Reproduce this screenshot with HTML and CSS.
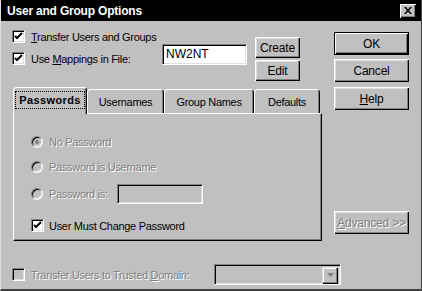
FILE: index.html
```html
<!DOCTYPE html>
<html>
<head>
<meta charset="utf-8">
<link rel="stylesheet" href="styles.css">
</head>
<body>
<div class="win">
  <div class="titlebar">
    <span class="title">User and Group Options</span>
    <span class="close"><svg width="8" height="7" viewBox="0 0 8 7"><path d="M0,0h2l2,2.5l2,-2.5h2l-3,3.5l3,3.5h-2l-2,-2.5l-2,2.5h-2l3,-3.5z" fill="#000"/></svg></span>
  </div>
  <div class="content">
    <div class="upper">
      <div class="left">
        <div class="top">
          <div class="checks">
            <div class="row"><span class="chk"><svg width="9" height="9" viewBox="0 0 9 9"><path d="M1,4 L3,6 L8,1" stroke="#000" stroke-width="2" fill="none"/></svg></span><span class="lbl"><u>T</u>ransfer Users and Groups</span></div>
            <div class="row"><span class="chk"><svg width="9" height="9" viewBox="0 0 9 9"><path d="M1,4 L3,6 L8,1" stroke="#000" stroke-width="2" fill="none"/></svg></span><span class="lbl">Use <u>M</u>appings in File:</span></div>
          </div>
          <div class="field file">NW2NT</div>
          <div class="btncol">
            <div class="btn small">Create</div>
            <div class="btn small">Edit</div>
          </div>
        </div>
        <div class="tabs">
          <div class="tab active w1"><span class="focus">Passwords</span></div>
          <div class="tab w2">Usernames</div>
          <div class="tab w3">Group Names</div>
          <div class="tab w4">Defaults</div>
        </div>
        <div class="panel">
          <div class="opt o1"><span class="radio"><span class="dot"></span></span><span class="dis">No Password</span></div>
          <div class="opt o2"><span class="radio"></span><span class="dis">Password is Username</span></div>
          <div class="opt o3"><span class="radio"></span><span class="dis pwlbl">Password is:</span><span class="field pwfield"></span></div>
          <div class="opt o4"><span class="chk"><svg width="9" height="9" viewBox="0 0 9 9"><path d="M1,4 L3,6 L8,1" stroke="#000" stroke-width="2" fill="none"/></svg></span><span class="lbl">User Must Change Password</span></div>
        </div>
      </div>
      <div class="right">
        <div class="btn default">OK</div>
        <div class="btn b-cancel">Cancel</div>
        <div class="btn b-help"><u>H</u>elp</div>
        <div class="btn b-adv"><span class="dis"><u>A</u>dvanced &gt;&gt;</span></div>
      </div>
    </div>
    <div class="bottom">
      <span class="chk off"></span>
      <span class="dis domlbl">Transfer Users to Trusted <u>D</u>omain:</span>
      <div class="combo">
        <span class="drop"><svg width="7" height="5" viewBox="0 0 7 5"><path d="M0,0h7l-3.5,4z" fill="#808080"/></svg></span>
      </div>
    </div>
  </div>
</div>
</body>
</html>
```

FILE: styles.css
```css
* { box-sizing: border-box; }
html, body { margin: 0; padding: 0; background: #c0c0c0; }
body {
  font-family: "Liberation Sans", Arial, sans-serif;
  font-size: 11px;
  letter-spacing: -0.3px;
  color: #000;
}
u { text-decoration: underline; text-underline-offset: 1px; }

.win {
  width: 422px;
  height: 291px;
  background: #c0c0c0;
  border-left: 1px solid #dfdfdf;
  border-right: 1px solid #404040;
  border-bottom: 2px solid #404040;
  display: flex;
  flex-direction: column;
}

.titlebar {
  height: 21px;
  background: #000;
  display: flex;
  align-items: center;
  justify-content: space-between;
  padding-left: 6px;
  padding-right: 5px;
}
.title {
  color: #fff;
  font-weight: bold;
  font-size: 12px;
  letter-spacing: -0.2px;
}
.close {
  width: 16px;
  height: 14px;
  background: #c0c0c0;
  box-shadow: inset 1px 1px 0 #fff, inset -1px -1px 0 #000, inset -2px -2px 0 #808080;
  display: flex;
  align-items: center;
  justify-content: center;
  padding-bottom: 1px;
}

.content {
  flex: 1;
  display: flex;
  flex-direction: column;
}
.upper {
  display: flex;
  padding-left: 11px;
  height: 220px;
}
.left {
  width: 310px;
  display: flex;
  flex-direction: column;
}
.top {
  display: flex;
  align-items: flex-start;
  height: 60px;
}
.checks {
  width: 150px;
  padding-top: 9px;
  display: flex;
  flex-direction: column;
  gap: 9px;
}
.row {
  display: flex;
  align-items: center;
  height: 13px;
}
.chk {
  width: 13px;
  height: 13px;
  flex: none;
  background: #fff;
  border: 1px solid;
  border-color: #808080 #fff #fff #808080;
  box-shadow: inset 1px 1px 0 #000, inset -1px -1px 0 #dfdfdf;
  display: flex;
  align-items: center;
  justify-content: center;
}
.chk.off { background: #c0c0c0; }
.row .lbl { margin-left: 6px; }

.field {
  background: #fff;
  border: 1px solid;
  border-color: #808080 #fff #fff #808080;
  box-shadow: inset 1px 1px 0 #000, inset -1px -1px 0 #dfdfdf;
}
.file {
  margin-top: 23px;
  width: 85px;
  height: 21px;
  padding-left: 3px;
  line-height: 19px;
  font-size: 12px;
  letter-spacing: 0;
}
.btncol {
  margin-left: 8px;
  padding-top: 16px;
  display: flex;
  flex-direction: column;
  gap: 2px;
}
.btn {
  display: flex;
  align-items: center;
  justify-content: center;
  height: 23px;
  width: 75px;
  background: #c0c0c0;
  box-shadow: inset 1px 1px 0 #fff, inset -1px -1px 0 #000, inset -2px -2px 0 #808080, inset 2px 2px 0 #dfdfdf;
  font-size: 12px;
  letter-spacing: -0.2px;
}
.btn.small { width: 45px; height: 21px; }
.btn.default {
  border: 1px solid #000;
  box-shadow: inset 1px 1px 0 #fff, inset -1px -1px 0 #000, inset -2px -2px 0 #808080;
}

.tabs {
  margin-top: 6px;
  margin-left: 1px;
  height: 26px;
  display: flex;
  align-items: flex-end;
  position: relative;
  z-index: 1;
}
.tab {
  height: 24px;
  display: flex;
  align-items: center;
  justify-content: center;
  background: #c0c0c0;
  border-top: 1px solid #fff;
  border-left: 1px solid #fff;
  border-right: 1px solid #000;
  border-radius: 4px 4px 0 0;
  box-shadow: inset -1px 0 0 #808080;
  font-size: 11px;
}
.tab.active {
  height: 27px;
  margin-bottom: -1px;
  font-weight: bold;
  letter-spacing: 0.4px;
  padding-bottom: 2px;
}
.focus {
  outline: 1px dotted #000;
  outline-offset: 2px;
  padding: 0 1px;
}
.w1 { width: 74px; }
.w2 { width: 77px; }
.w3 { width: 90px; }
.w4 { width: 66px; }

.panel {
  margin-left: 1px;
  width: 309px;
  height: 128px;
  border-top: 1px solid #fff;
  border-left: 1px solid #fff;
  border-right: 1px solid #000;
  border-bottom: 1px solid #000;
  box-shadow: inset -1px -1px 0 #808080;
  padding-left: 17px;
  padding-top: 18px;
  display: flex;
  flex-direction: column;
}
.opt {
  display: flex;
  align-items: center;
  height: 20px;
}
.o2 { margin-top: 5px; }
.o3 { margin-top: 7px; }
.o4 { margin-top: 15px; height: 13px; }
.o4 .lbl { margin-left: 5px; }
.radio {
  width: 12px;
  height: 12px;
  flex: none;
  border-radius: 50%;
  border: 1px solid;
  border-color: #808080 #fff #fff #808080;
  box-shadow: inset 1px 1px 0 #000, inset -1px -1px 0 #dfdfdf;
  background: #c0c0c0;
  display: flex;
  align-items: center;
  justify-content: center;
  margin-right: 6px;
}
.dot {
  width: 4px;
  height: 4px;
  border-radius: 50%;
  background: #808080;
}
.dis {
  color: #808080;
  text-shadow: 1px 1px 0 #fff;
}
.pwlbl { width: 68px; }
.pwfield {
  width: 86px;
  height: 20px;
  background: #c0c0c0;
}

.right {
  margin-left: 12px;
  width: 75px;
  padding-top: 11px;
  display: flex;
  flex-direction: column;
}
.b-cancel { margin-top: 4px; }
.b-help { margin-top: 5px; }
.b-adv { margin-top: 101px; }

.bottom {
  margin-top: 23px;
  padding-left: 11px;
  display: flex;
  align-items: center;
  height: 21px;
}
.domlbl { margin-left: 6px; width: 183px; }
.combo {
  width: 127px;
  height: 21px;
  border: 1px solid;
  border-color: #808080 #fff #fff #808080;
  box-shadow: inset 1px 1px 0 #000, inset -1px -1px 0 #dfdfdf;
  background: #c0c0c0;
  display: flex;
  justify-content: flex-end;
  padding: 2px;
}
.drop {
  width: 16px;
  height: 17px;
  box-shadow: inset 1px 1px 0 #dfdfdf, inset -1px -1px 0 #000, inset -2px -2px 0 #808080, inset 2px 2px 0 #fff;
  display: flex;
  align-items: center;
  justify-content: center;
}
```
